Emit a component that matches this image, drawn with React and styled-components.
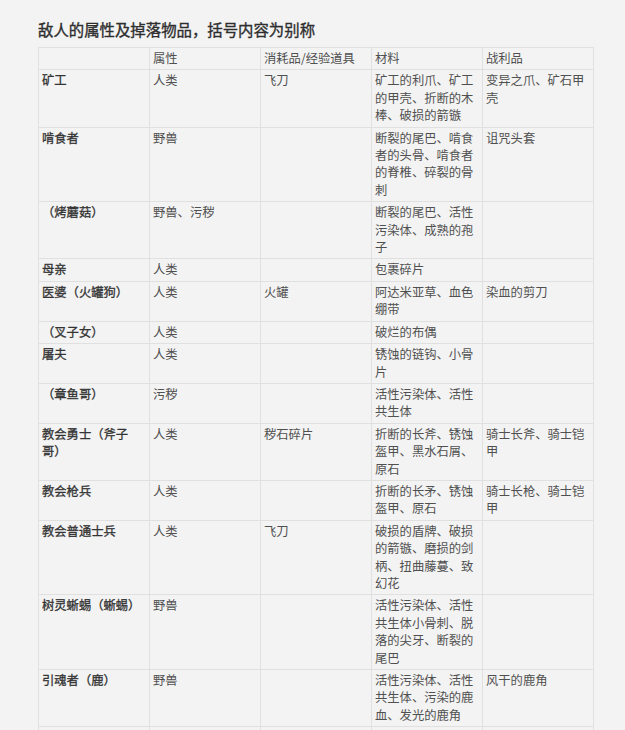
import React from "react";
import styled, { createGlobalStyle } from "styled-components";

const GlobalStyle = createGlobalStyle`
  html, body {
    margin: 0;
    padding: 0;
    background: #f3f3f3;
  }
  body {
    font-family: "Noto Sans CJK SC", "Noto Sans", sans-serif;
    color: #444;
  }
`;

const Page = styled.div`
  padding: 18px 31px 0 38px;
`;

const Title = styled.h2`
  margin: 0 0 7px;
  font-size: 15.4px;
  line-height: 22px;
  font-weight: 400;
  color: #2e2e2e;
  -webkit-text-stroke: 0.35px #2e2e2e;
`;

const Table = styled.table`
  width: 556px;
  border-collapse: collapse;
  table-layout: fixed;
  font-size: 12.3px;
  line-height: 17.4px;
`;

const Cell = styled.td`
  border: 1px solid #e0e0e0;
  padding: 2px 3px;
  vertical-align: top;
  text-align: left;
  color: ${(p) => (p.$name ? "#333" : "#505050")};
  font-weight: 400;
  -webkit-text-stroke: ${(p) => (p.$name ? "0.3px #333" : "0")};
  word-break: break-all;
`;

const HeadCell = styled.th`
  border: 1px solid #e0e0e0;
  padding: 2px 3px;
  vertical-align: top;
  text-align: left;
  font-weight: 400;
  color: #505050;
`;

const headers = ["", "属性", "消耗品/经验道具", "材料", "战利品"];

const rows = [
  ["矿工", "人类", "飞刀", "矿工的利爪、矿工的甲壳、折断的木棒、破损的箭镞", "变异之爪、矿石甲壳"],
  ["啃食者", "野兽", "", "断裂的尾巴、啃食者的头骨、啃食者的脊椎、碎裂的骨刺", "诅咒头套"],
  ["（烤蘑菇）", "野兽、污秽", "", "断裂的尾巴、活性污染体、成熟的孢子", ""],
  ["母亲", "人类", "", "包裹碎片", ""],
  ["医婆（火罐狗）", "人类", "火罐", "阿达米亚草、血色绷带", "染血的剪刀"],
  ["（叉子女）", "人类", "", "破烂的布偶", ""],
  ["屠夫", "人类", "", "锈蚀的链钩、小骨片", ""],
  ["（章鱼哥）", "污秽", "", "活性污染体、活性共生体", ""],
  ["教会勇士（斧子哥）", "人类", "秽石碎片", "折断的长斧、锈蚀盔甲、黑水石屑、原石", "骑士长斧、骑士铠甲"],
  ["教会枪兵", "人类", "", "折断的长矛、锈蚀盔甲、原石", "骑士长枪、骑士铠甲"],
  ["教会普通士兵", "人类", "飞刀", "破损的盾牌、破损的箭镞、磨损的剑柄、扭曲藤蔓、致幻花", ""],
  ["树灵蜥蜴（蜥蜴）", "野兽", "", "活性污染体、活性共生体小骨刺、脱落的尖牙、断裂的尾巴", ""],
  ["引魂者（鹿）", "野兽", "", "活性污染体、活性共生体、污染的鹿血、发光的鹿角", "风干的鹿角"],
  ["", "", "", "", ""],
];

export default function App() {
  return (
    <Page>
      <GlobalStyle />
      <Title>敌人的属性及掉落物品，括号内容为别称</Title>
      <Table>
        <thead>
          <tr>
            {headers.map((h, i) => (
              <HeadCell key={i}>{h}</HeadCell>
            ))}
          </tr>
        </thead>
        <tbody>
          {rows.map((r, i) => (
            <tr key={i}>
              {r.map((c, j) => (
                <Cell key={j} $name={j === 0}>
                  {c || "\u00a0"}
                </Cell>
              ))}
            </tr>
          ))}
        </tbody>
      </Table>
    </Page>
  );
}
